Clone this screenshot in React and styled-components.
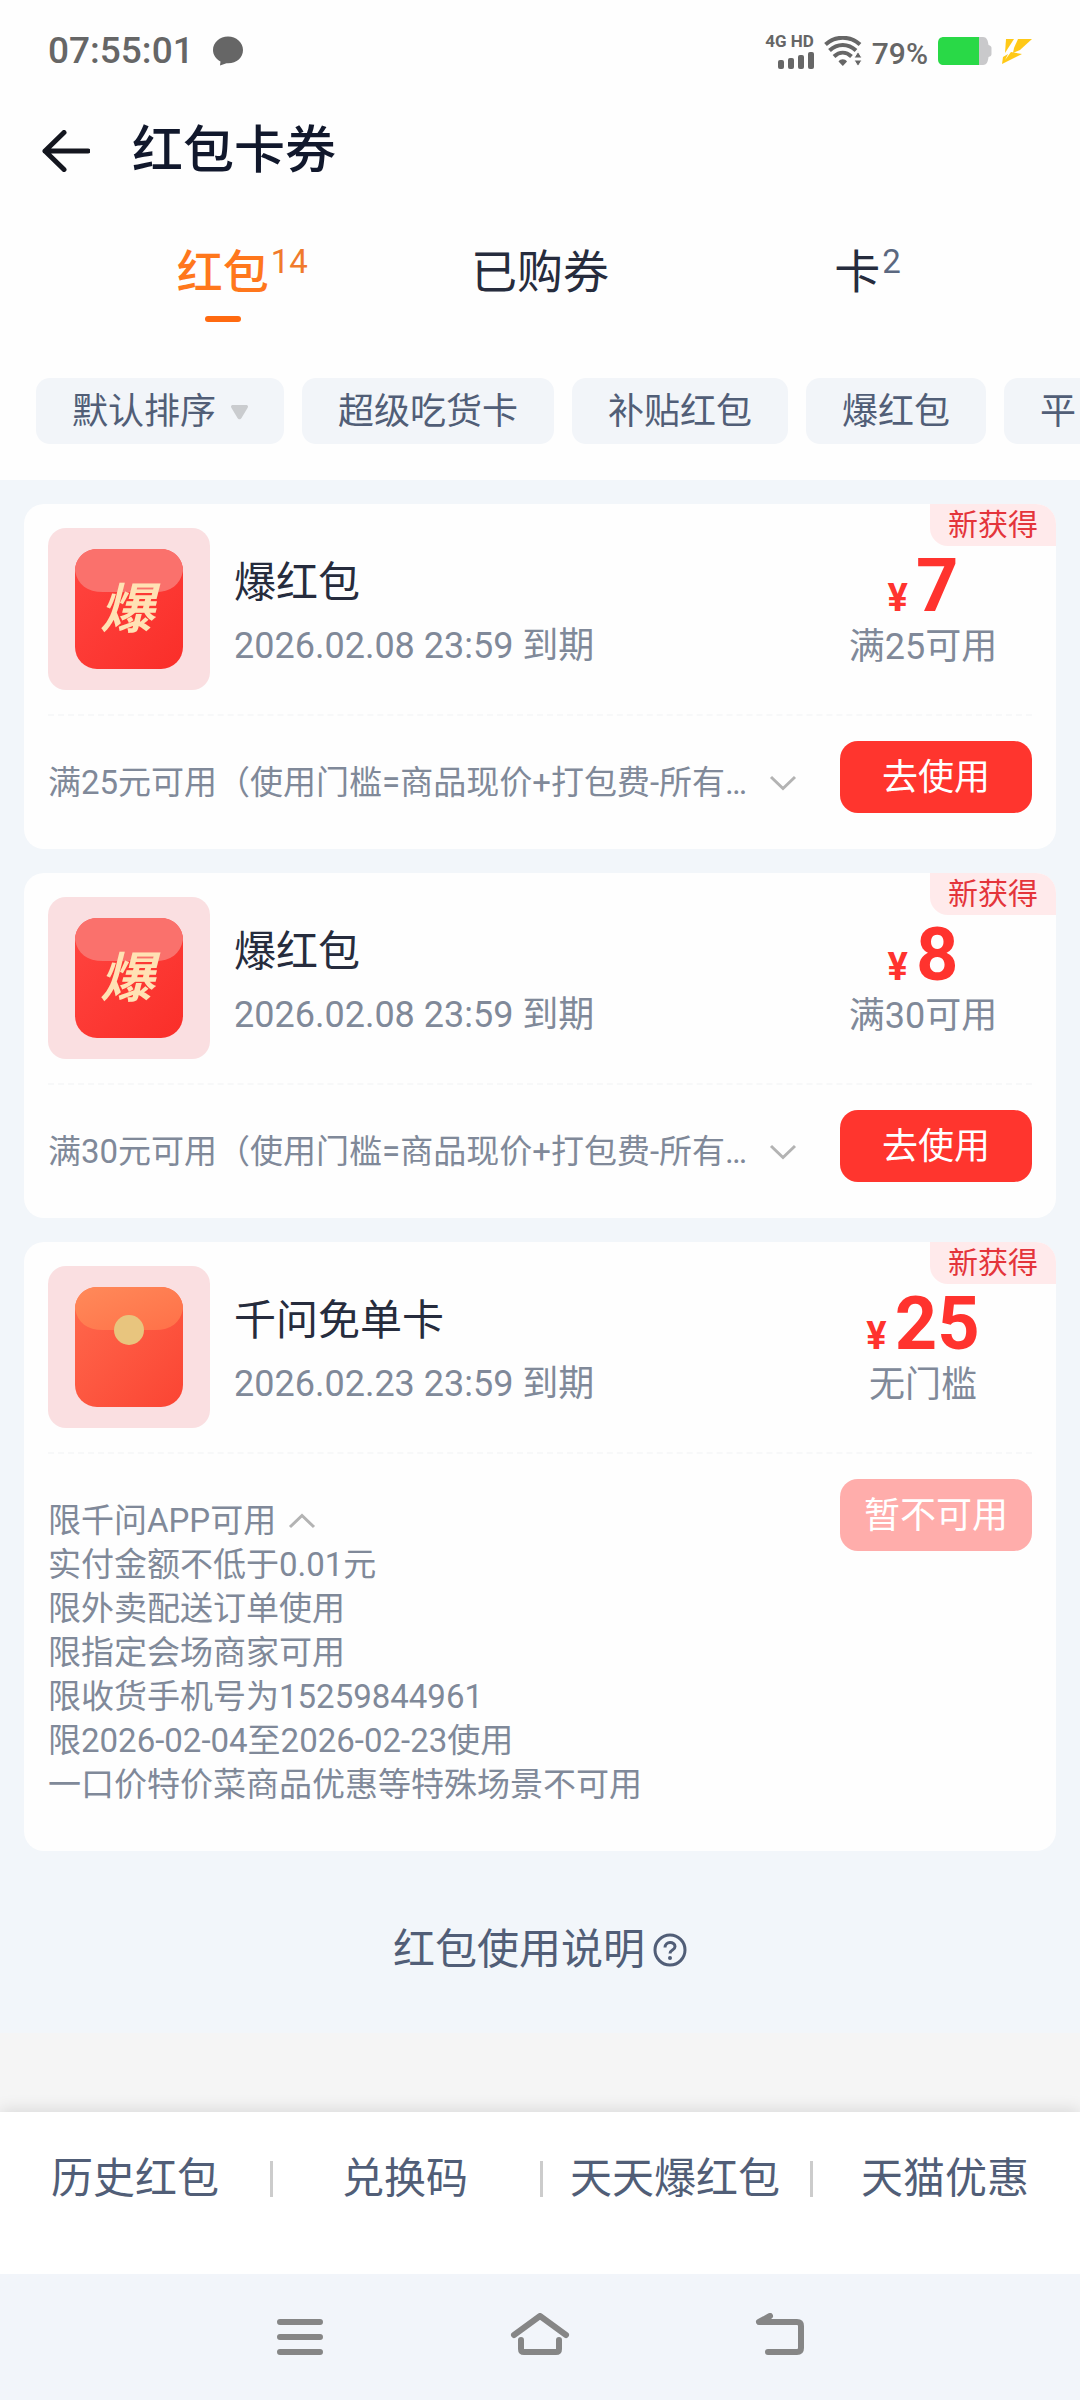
import React, { useState } from 'react'
import styled, { createGlobalStyle } from 'styled-components'

const GlobalStyle = createGlobalStyle`
  * {
    box-sizing: border-box;
  }

  body {
    margin: 0;
    background: #f5f5f5;
    color: #262c3d;
    font-family: Roboto, 'Noto Sans CJK SC', sans-serif;
    font-size: 36px;
  }

  button,
  select {
    margin: 0;
    padding: 0;
    border: 0;
    background: none;
    color: inherit;
    font: inherit;
    cursor: pointer;
  }
`

const Page = styled.div`
  display: flex;
  flex-direction: column;
  min-height: 100vh;
`

const Top = styled.header`
  background: #fefefe;
  padding-bottom: 36px;
`

const StatusBar = styled.div`
  display: flex;
  align-items: center;
  justify-content: space-between;
  height: 102px;
  padding: 0 48px;
  color: #666;
`

const StatusGroup = styled.div`
  display: flex;
  align-items: center;
  gap: ${({ $gap }) => $gap}px;
`

const Clock = styled.span`
  font-size: 37px;
  font-weight: 500;
  line-height: 42px;
`

const Network = styled.div`
  display: flex;
  flex-direction: column;
  align-items: flex-end;
  gap: 3px;
  font-size: 17px;
  font-weight: 700;
  line-height: 16px;
`

const Percent = styled.span`
  font-size: 30px;
  font-weight: 500;
  line-height: 42px;
  padding-top: 6px;
`

const TitleBar = styled.div`
  display: flex;
  align-items: center;
  gap: 42px;
  height: 98px;
  padding: 0 42px;
`

const BackButton = styled.button`
  display: flex;
  color: #14161f;
`

const Title = styled.h1`
  margin: 0;
  color: #11182c;
  font-size: 51px;
  font-weight: 500;
  line-height: 60px;
`

const Tabs = styled.nav`
  display: grid;
  grid-template-columns: repeat(3, 1fr);
  justify-items: center;
  padding: 40px 64px 56px;
`

const Tab = styled.button`
  position: relative;
  height: 82px;
  color: ${({ $active }) => ($active ? '#ff771c' : '#262c3d')};
  font-size: 46px;
  font-weight: ${({ $active }) => ($active ? 500 : 400)};
  line-height: 64px;
  padding-bottom: 18px;

  &::after {
    content: '';
    display: ${({ $active }) => ($active ? 'block' : 'none')};
    position: absolute;
    left: calc(50% - 18px);
    bottom: 0;
    width: 36px;
    height: 6px;
    border-radius: 3px;
    background: #ff6a10;
  }
`

const Count = styled.span`
  position: absolute;
  left: 100%;
  top: 2px;
  padding-left: 2px;
  color: ${({ $active }) => ($active ? '#f07a2c' : '#5b6880')};
  font-size: 33px;
  font-weight: 400;
  line-height: 40px;
`

const Filters = styled.div`
  display: flex;
  gap: 18px;
  padding-left: 36px;
  overflow: hidden;
`

const Chip = styled.button`
  flex: none;
  height: 66px;
  padding: 2px 36px 0;
  border-radius: 14px;
  background: #f2f5f9;
  color: #515e77;
  line-height: 64px;
`

const SortChip = styled(Chip).attrs({ as: 'label' })`
  display: flex;
  align-items: center;
  gap: 14px;
  cursor: pointer;
`

const SortSelect = styled.select`
  appearance: none;
  height: 64px;
  outline: 0;
`

const Content = styled.main`
  padding: 24px;
  background: #f2f6fa;
`

const CardList = styled.div`
  display: flex;
  flex-direction: column;
  gap: 24px;
`

const Card = styled.article`
  position: relative;
  padding: 24px 24px 36px;
  border-radius: 20px;
  background: #fefefe;
`

const Badge = styled.span`
  position: absolute;
  top: 0;
  right: 0;
  padding: 0 18px;
  border-radius: 0 20px 0 18px;
  background: #ffeaeb;
  color: #e4353b;
  font-size: 30px;
  line-height: 42px;
`

const CardHead = styled.div`
  display: flex;
  gap: 24px;
  padding-bottom: 24px;
`

const Tile = styled.div`
  display: flex;
  flex: none;
  align-items: center;
  justify-content: center;
  width: 162px;
  height: 162px;
  border-radius: 18px;
  background: #fadfe1;
`

const Info = styled.div`
  flex: 1;
  min-width: 0;
  padding-top: 28px;
`

const CardTitle = styled.h2`
  margin: 0 0 14px;
  font-size: 42px;
  font-weight: 400;
  line-height: 54px;
`

const Muted = styled.p`
  margin: 0;
  color: #808999;
  line-height: 44px;
`

const Amount = styled.div`
  flex: none;
  width: 218px;
  padding-top: 25px;
  text-align: center;
`

const Price = styled.div`
  display: flex;
  align-items: baseline;
  justify-content: center;
  gap: 8px;
  height: 72px;
  color: #ff332e;
  font-size: 74px;
  font-weight: 700;
  line-height: 66px;
`

const Currency = styled.span`
  font-size: 38px;
`

const CardFoot = styled.div`
  display: flex;
  justify-content: space-between;
  padding-top: 25px;
  border-top: 2px dashed #f7f8f9;
`

const Rules = styled.div`
  padding: 20px 0 8px;
  color: #808999;
  font-size: 33px;
  line-height: 44px;
`

const RuleLine = styled.div`
  display: flex;
  align-items: center;
  white-space: nowrap;
`

const Toggle = styled.button`
  display: flex;
  padding-left: ${({ $open }) => ($open ? 12 : 22)}px;
  color: #b3b3b3;
`

const UseButton = styled.button`
  flex: none;
  width: 192px;
  height: 72px;
  padding-top: 2px;
  border-radius: 18px;
  background: ${({ disabled }) => (disabled ? '#ffadab' : '#ff352e')};
  color: #fff;
  line-height: 70px;
`

const HelpLink = styled.a`
  display: flex;
  align-items: center;
  justify-content: center;
  gap: 8px;
  padding: 72px 0 32px;
  color: #515e77;
  font-size: 42px;
  line-height: 54px;
  text-decoration: none;
`

const BottomBar = styled.nav`
  display: grid;
  grid-template-columns: repeat(4, 1fr);
  margin-top: auto;
  padding: 37px 0 65px;
  background: #fff;
  box-shadow: 0 -2px 16px rgba(0, 0, 0, 0.12);
`

const BottomLink = styled.a`
  display: flex;
  align-items: center;
  justify-content: center;
  position: relative;
  color: #515e77;
  font-size: 42px;
  line-height: 60px;
  text-decoration: none;
  white-space: nowrap;

  & + &::before {
    content: '';
    position: absolute;
    left: 0;
    width: 3px;
    height: 36px;
    background: #ccc;
  }
`

const SystemBar = styled.div`
  display: flex;
  align-items: center;
  justify-content: center;
  gap: 180px;
  height: 126px;
  background: #f2f5fa;
`

const SystemButton = styled.button`
  display: flex;
  color: #868686;
`

const tabs = [
  { label: '红包', count: 14 },
  { label: '已购券' },
  { label: '卡', count: 2 },
]

const filters = ['超级吃货卡', '补贴红包', '爆红包', '平']

const coupons = [
  {
    id: 1,
    kind: 'bao',
    title: '爆红包',
    expires: '2026.02.08 23:59 到期',
    amount: 7,
    limit: '满25可用',
    rules: ['满25元可用（使用门槛=商品现价+打包费-所有…'],
  },
  {
    id: 2,
    kind: 'bao',
    title: '爆红包',
    expires: '2026.02.08 23:59 到期',
    amount: 8,
    limit: '满30可用',
    rules: ['满30元可用（使用门槛=商品现价+打包费-所有…'],
  },
  {
    id: 3,
    kind: 'envelope',
    title: '千问免单卡',
    expires: '2026.02.23 23:59 到期',
    amount: 25,
    limit: '无门槛',
    disabled: true,
    rules: [
      '限千问APP可用',
      '实付金额不低于0.01元',
      '限外卖配送订单使用',
      '限指定会场商家可用',
      '限收货手机号为15259844961',
      '限2026-02-04至2026-02-23使用',
      '一口价特价菜商品优惠等特殊场景不可用',
    ],
  },
]

const links = ['历史红包', '兑换码', '天天爆红包', '天猫优惠']

function BubbleIcon() {
  return (
    <svg width="30" height="30" viewBox="0 0 30 30" fill="currentColor">
      <path d="M15 0.5C6.700 0.500 0 6.500 0 14c0 4.800 2.800 9 7.500 11.400L7 29.500l6.500-2.300c9.500.8 16.500-5.200 16.500-13.200C30 6.500 23.300.5 15 .5z" />
    </svg>
  )
}

function SignalIcon() {
  return (
    <svg width="36" height="17" viewBox="0 0 36 17" fill="currentColor">
      <rect x="0" y="8" width="6" height="9" rx="2" />
      <rect x="10" y="6" width="6" height="11" rx="2" />
      <rect x="20" y="3" width="6" height="14" rx="2" />
      <rect x="30" y="0" width="6" height="17" rx="2" />
    </svg>
  )
}

function WifiIcon() {
  return (
    <svg width="38" height="30" viewBox="0 0 38 30" fill="none" stroke="currentColor">
      <path d="M1.500 8.500c10-9 24.500-9 34.500 0" strokeWidth="4" />
      <path d="M5.500 14.500c8-7.500 18.500-7.500 26.500 0" strokeWidth="4" />
      <path d="M10 20.500c5.500-5 12-5 17.500 0" strokeWidth="4" />
      <path d="M14.500 25.500c2-3 6.500-3 8.500 0l-4.200 4.500z" fill="currentColor" stroke="none" />
      <path d="M34 15.500l4 6.500h-8zM34 30.500l4-6.500h-8z" fill="currentColor" stroke="#fefefe" />
    </svg>
  )
}

function BatteryIcon() {
  return (
    <svg width="54" height="28" viewBox="0 0 54 28">
      <path d="M38 0h7c3.500 0 5 3 5.500 8 2 .5 3 1.500 3 3v6c0 1.500-1 2.500-3 3-.5 5-2 8-5.500 8h-7z" fill="#c9c9cb" />
      <path d="M6 0h35v28H6c-4 0-6-2-6-6V6c0-4 2-6 6-6z" fill="#29d947" />
    </svg>
  )
}

function BoltIcon() {
  return (
    <svg width="30" height="25" viewBox="0 0 30 25" fill="#ffc917">
      <path d="M4 0h8L3 14z" />
      <path d="M16 0h14L18 11l-7 3 1-5z" />
      <path d="M9 13l11 2L0 25l1-7 5-3-3 6z" />
    </svg>
  )
}

function BackArrow() {
  return (
    <svg width="48" height="42" viewBox="0 0 48 42" fill="none" stroke="currentColor" strokeWidth="5" strokeLinecap="round" strokeLinejoin="round">
      <path d="M22 2.500L3 21l19 18.500M3 21h43" />
    </svg>
  )
}

function Chevron({ up }) {
  return (
    <svg width="28" height="16" viewBox="0 0 28 16" fill="none" stroke="currentColor" strokeWidth="3">
      <path d={up ? 'M2 14L14 2.500L26 14' : 'M2 2L14 13.500L26 2'} />
    </svg>
  )
}

function BaoIcon() {
  return (
    <svg width="108" height="120" viewBox="0 0 108 120">
      <defs>
        <linearGradient id="baoBody" x1="0" y1="0" x2="1" y2="1">
          <stop offset="0" stopColor="#ff4540" />
          <stop offset="1" stopColor="#fa2e29" />
        </linearGradient>
      </defs>
      <rect width="108" height="120" rx="22" fill="url(#baoBody)" />
      <path d="M22 0h64c13 0 22 10 22 22C105 36 96 43 80 43H28C12 43 3 36 0 22 0 10 9 0 22 0z" fill="#fa716c" />
      <text
        x="52"
        y="79"
        textAnchor="middle"
        fill="#ffe2b4"
        fontFamily="'Noto Sans CJK SC', sans-serif"
        fontSize="54"
        fontWeight="700"
        fontStyle="italic"
      >
        爆
      </text>
    </svg>
  )
}

function EnvelopeIcon() {
  return (
    <svg width="108" height="120" viewBox="0 0 108 120">
      <defs>
        <linearGradient id="envBody" x1="0" y1="0" x2="1" y2="1">
          <stop offset="0" stopColor="#ff6a4d" />
          <stop offset="1" stopColor="#fb4433" />
        </linearGradient>
        <linearGradient id="envFlap" x1="0" y1="0" x2="1" y2="1">
          <stop offset="0" stopColor="#ff8a5a" />
          <stop offset="1" stopColor="#ff7048" />
        </linearGradient>
      </defs>
      <rect width="108" height="120" rx="22" fill="url(#envBody)" />
      <path d="M22 0h64c13 0 22 10 22 22C105 36 96 43 80 43H28C12 43 3 36 0 22 0 10 9 0 22 0z" fill="url(#envFlap)" />
      <circle cx="54" cy="43" r="15" fill="#e8c57e" />
    </svg>
  )
}

function HelpIcon() {
  return (
    <svg width="34" height="34" viewBox="0 0 34 34" fill="none" stroke="currentColor" strokeWidth="3">
      <circle cx="17" cy="17" r="15" />
      <path d="M12 14.500c0-6.500 10-6.500 10-1 0 4-5 3-5 7" />
      <circle cx="17" cy="25" r="2" fill="currentColor" stroke="none" />
    </svg>
  )
}

function SystemIcon({ children }) {
  return (
    <svg width="60" height="48" viewBox="0 2 60 48" fill="none" stroke="currentColor" strokeWidth="6" strokeLinecap="round" strokeLinejoin="round">
      {children}
    </svg>
  )
}

// eslint-disable-next-line react/prop-types
function Coupon({ coupon }) {
  const { kind, title, expires, amount, limit, disabled, rules } = coupon
  const [open, setOpen] = useState(rules.length > 1)
  const lines = open ? rules : rules.slice(0, 1)

  return (
    <Card>
      <Badge>新获得</Badge>
      <CardHead>
        <Tile>{kind === 'bao' ? <BaoIcon /> : <EnvelopeIcon />}</Tile>
        <Info>
          <CardTitle>{title}</CardTitle>
          <Muted>{expires}</Muted>
        </Info>
        <Amount>
          <Price>
            <Currency>¥</Currency>
            {amount}
          </Price>
          <Muted>{limit}</Muted>
        </Amount>
      </CardHead>
      <CardFoot>
        <Rules>
          {lines.map((line, index) => (
            <RuleLine key={line}>
              {line}
              {index === 0 && (
                <Toggle
                  $open={open}
                  aria-label="使用规则"
                  aria-expanded={open}
                  onClick={() => setOpen(!open)}
                >
                  <Chevron up={open} />
                </Toggle>
              )}
            </RuleLine>
          ))}
        </Rules>
        <UseButton disabled={disabled}>
          {disabled ? '暂不可用' : '去使用'}
        </UseButton>
      </CardFoot>
    </Card>
  )
}

function App() {
  const [active, setActive] = useState('红包')

  return (
    <Page>
      <GlobalStyle />
      <Top>
        <StatusBar>
          <StatusGroup $gap={19}>
            <Clock>07:55:01</Clock>
            <BubbleIcon />
          </StatusGroup>
          <StatusGroup $gap={10}>
            <Network>
              4G HD
              <SignalIcon />
            </Network>
            <WifiIcon />
            <Percent>79%</Percent>
            <BatteryIcon />
            <BoltIcon />
          </StatusGroup>
        </StatusBar>
        <TitleBar>
          <BackButton aria-label="返回">
            <BackArrow />
          </BackButton>
          <Title>红包卡券</Title>
        </TitleBar>
        <Tabs>
          {tabs.map(({ label, count }) => (
            <Tab
              key={label}
              $active={label === active}
              onClick={() => setActive(label)}
            >
              {label}
              {count && <Count $active={label === active}>{count}</Count>}
            </Tab>
          ))}
        </Tabs>
        <Filters>
          <SortChip>
            <SortSelect aria-label="排序">
              <option>默认排序</option>
            </SortSelect>
            <svg width="17" height="15" viewBox="0 0 17 15" fill="#cacccf">
              <path d="M2 0h13c2 0 2.500 1.500 1.500 3l-6 10c-1 1.800-3 1.800-4 0l-6-10C-.5 1.500 0 0 2 0z" />
            </svg>
          </SortChip>
          {filters.map((name) => (
            <Chip key={name}>{name}</Chip>
          ))}
        </Filters>
      </Top>
      <Content>
        <CardList>
          {coupons.map((coupon) => (
            <Coupon key={coupon.id} coupon={coupon} />
          ))}
        </CardList>
        <HelpLink href="#help">
          红包使用说明
          <HelpIcon />
        </HelpLink>
      </Content>
      <BottomBar>
        {links.map((name) => (
          <BottomLink key={name} href="#more">
            {name}
          </BottomLink>
        ))}
      </BottomBar>
      <SystemBar>
        <SystemButton aria-label="最近任务">
          <SystemIcon>
            <path d="M10 11h40M10 26h40M10 41h40" />
          </SystemIcon>
        </SystemButton>
        <SystemButton aria-label="主屏幕">
          <SystemIcon>
            <path d="M4 24L30 5l26 19M11 29v9q0 3 3 3h32q3 0 3-3v-9" />
          </SystemIcon>
        </SystemButton>
        <SystemButton aria-label="返回上一页">
          <SystemIcon>
            <path d="M20 5L9 11h38q4 0 4 4v22q0 4-4 4H18" />
          </SystemIcon>
        </SystemButton>
      </SystemBar>
    </Page>
  )
}

export default App
